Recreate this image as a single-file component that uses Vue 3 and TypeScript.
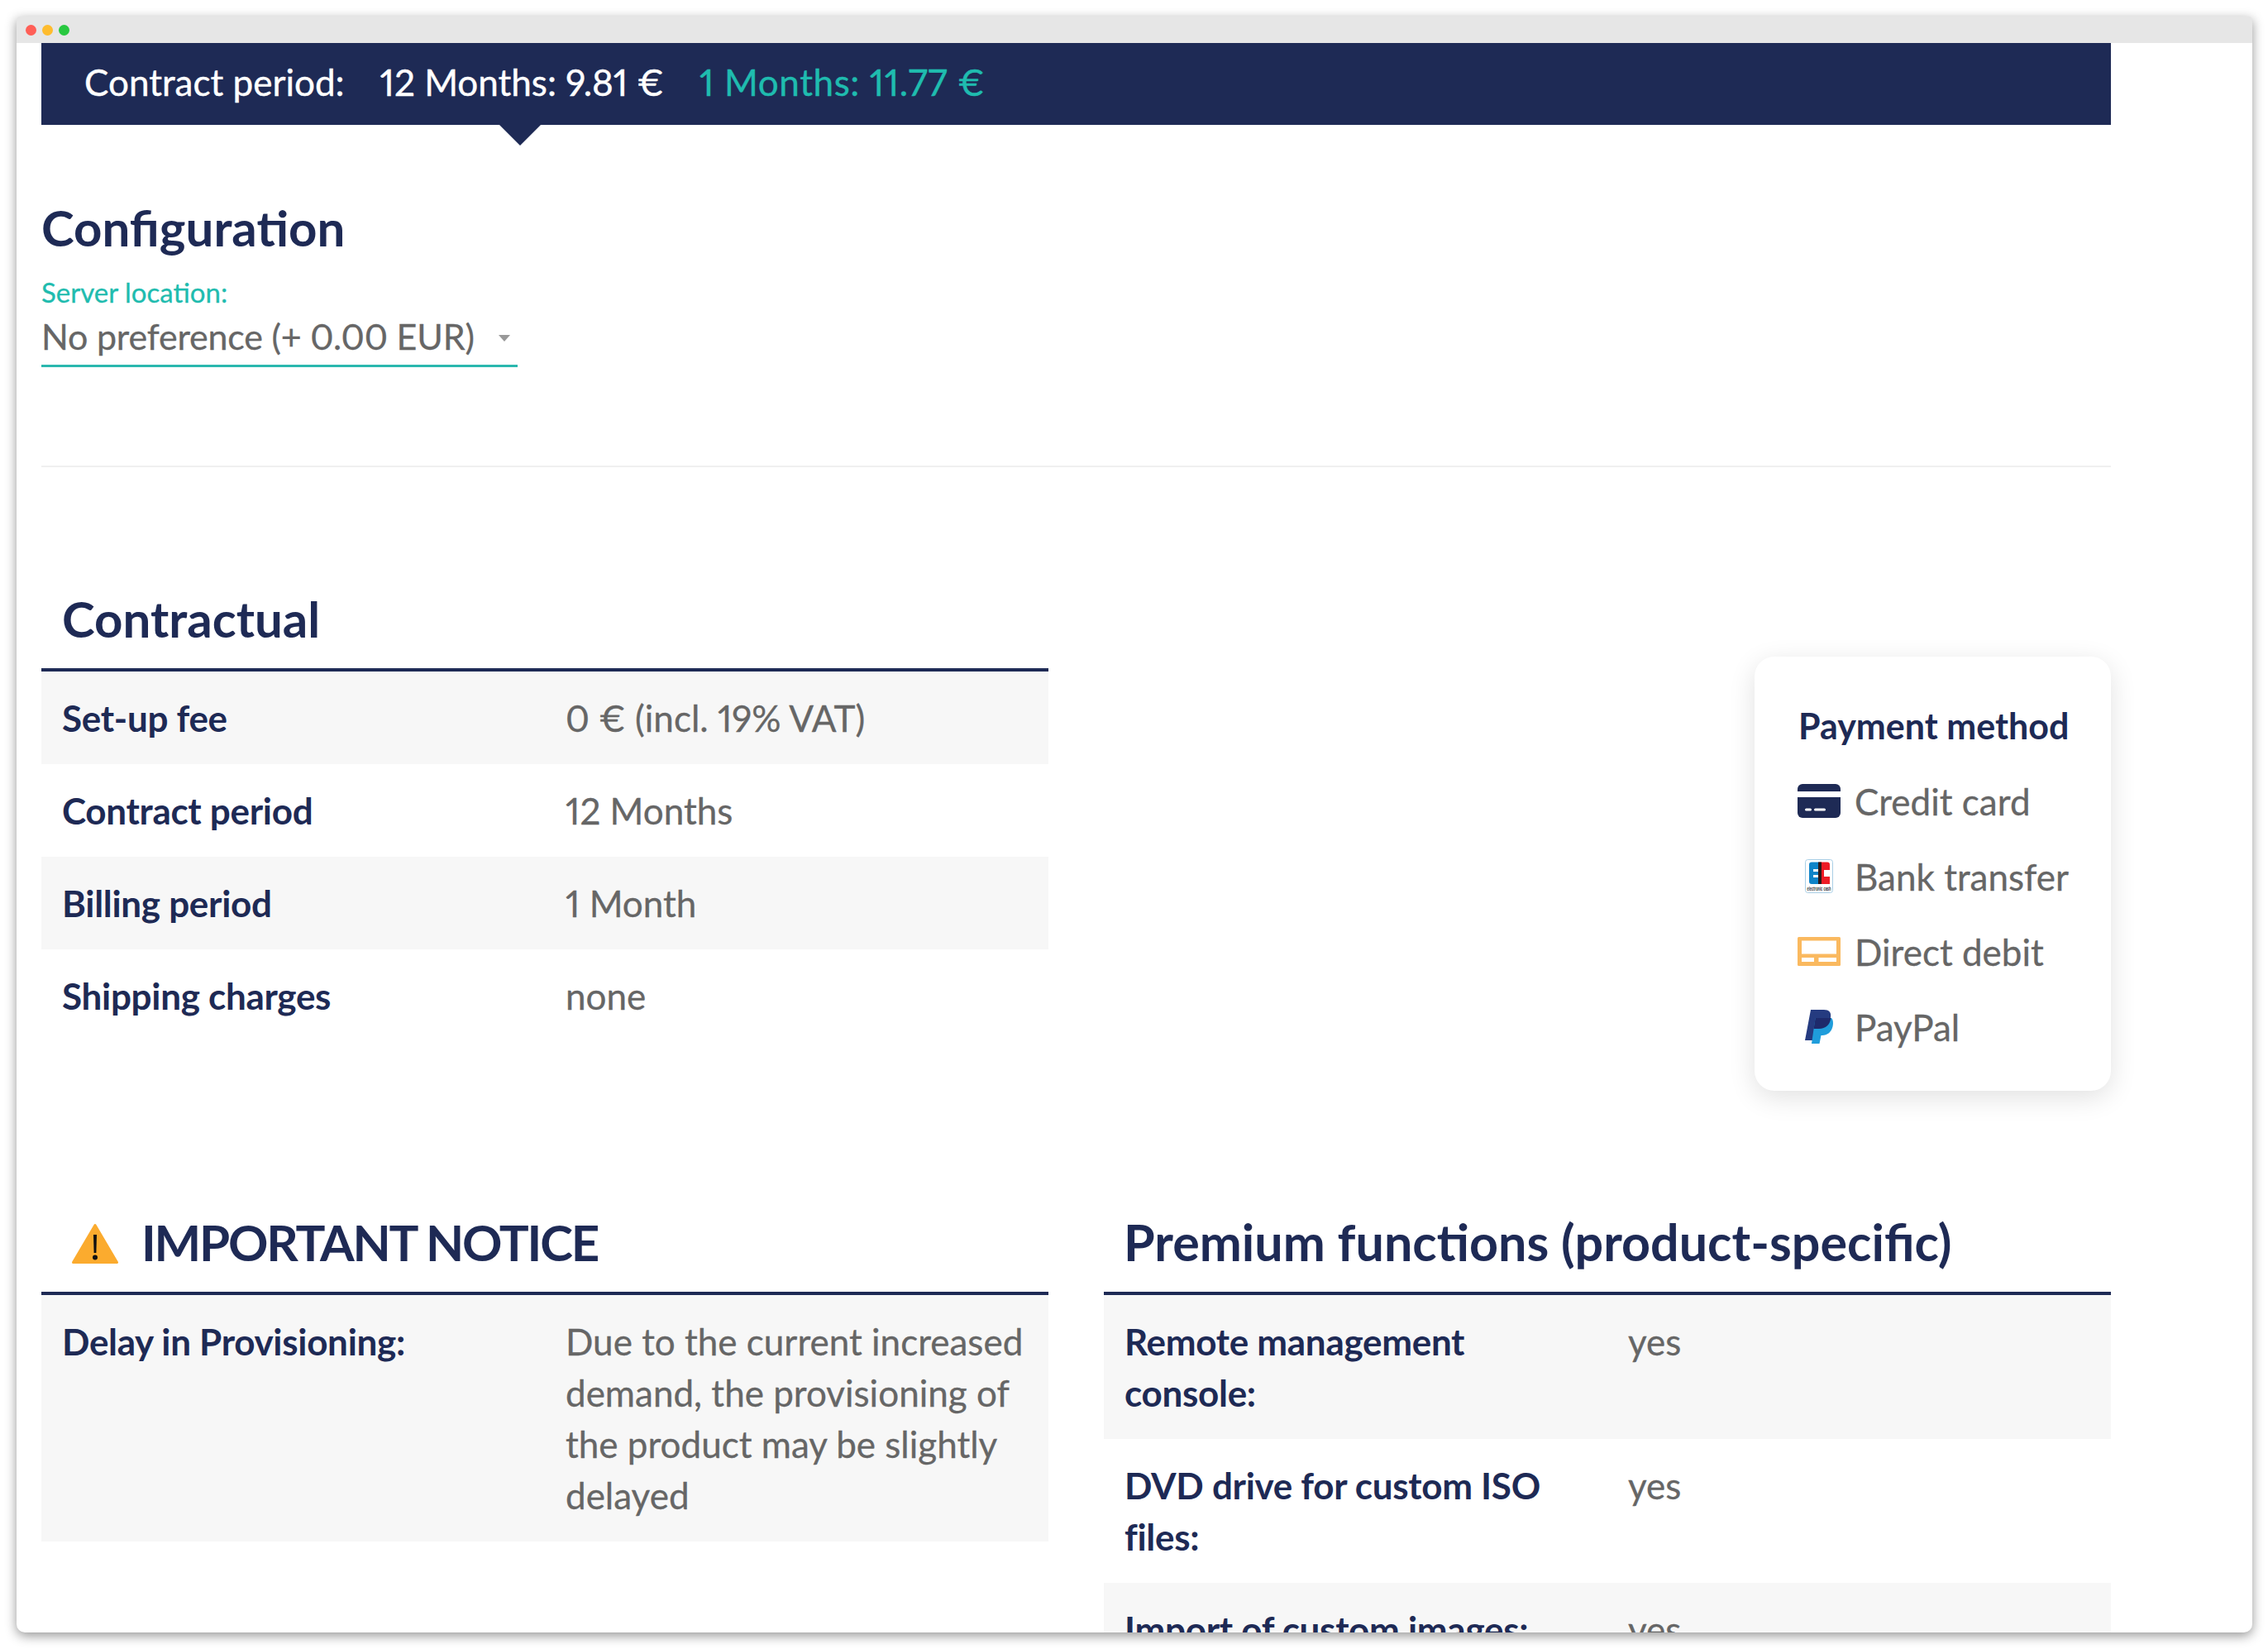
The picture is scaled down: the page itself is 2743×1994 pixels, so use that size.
<script setup lang="ts">
interface Row { label: string; value: string }

const contractual: Row[] = [
  { label: 'Set-up fee', value: '0 € (incl. 19% VAT)' },
  { label: 'Contract period', value: '12 Months' },
  { label: 'Billing period', value: '1 Month' },
  { label: 'Shipping charges', value: 'none' },
]
const notices: Row[] = [
  { label: 'Delay in Provisioning:', value: 'Due to the current increased demand, the provisioning of the product may be slightly delayed' },
]
const premium: Row[] = [
  { label: 'Remote management console:', value: 'yes' },
  { label: 'DVD drive for custom ISO files:', value: 'yes' },
  { label: 'Import of custom images:', value: 'yes' },
]
</script>

<template>
  <div class="page">
    <div class="window">
      <div class="titlebar">
        <span class="dot red"></span><span class="dot amber"></span><span class="dot green"></span>
      </div>
      <div class="content">
        <div class="banner">
          <span class="period-label">Contract period:</span>
          <span class="period active">12 Months: 9.81 €</span>
          <span class="period teal">1 Months: 11.77 €</span>
        </div>

        <h2 class="config-title">Configuration</h2>
        <div class="field-label">Server location:</div>
        <div class="select">
          <span class="select-text">No preference (+ 0.00 EUR)</span>
          <span class="caret"></span>
        </div>
        <div class="divider"></div>

        <div class="top-row">
          <section class="block">
            <h2 class="block-title">Contractual</h2>
            <div class="rows">
              <div v-for="r in contractual" :key="r.label" class="row">
                <div class="label">{{ r.label }}</div>
                <div class="value">{{ r.value }}</div>
              </div>
            </div>
          </section>

          <aside class="card">
            <div class="card-title">Payment method</div>
            <div class="pay">
              <svg class="pay-icon" width="52" height="41" viewBox="0 0 52 41">
                <path d="M0 9V6a6 6 0 0 1 6-6h40a6 6 0 0 1 6 6v3Z" fill="#1e2a55" />
                <path d="M0 16h52v19a6 6 0 0 1-6 6H6a6 6 0 0 1-6-6Z" fill="#1e2a55" />
                <rect x="9" y="29.5" width="8" height="3" rx="1.5" fill="#fff" />
                <rect x="20" y="29.5" width="14" height="3" rx="1.5" fill="#fff" />
              </svg>
              <span>Credit card</span>
            </div>
            <div class="pay">
              <svg class="pay-icon" width="52" height="41" viewBox="0 0 52 41">
                <rect x="9.5" y="0.5" width="33" height="40" rx="3" fill="#fff" stroke="#a9cfe6" />
                <path d="M17 3.500H26V30H17a3 3 0 0 1-3-3V6.500a3 3 0 0 1 3-3Z" fill="#0f84c8" />
                <path d="M26 3.500H36a3 3 0 0 1 3 3V30H26Z" fill="#ee1c25" />
                <rect x="19" y="12" width="7" height="3" fill="#fff" />
                <rect x="19" y="19" width="7" height="3" fill="#fff" />
                <rect x="32" y="13" width="7" height="8" fill="#fff" />
                <rect x="25" y="3.500" width="4" height="26.500" fill="#2a1a1a" />
                <text x="26" y="37.500" text-anchor="middle" textLength="29" lengthAdjust="spacingAndGlyphs" class="ec-text">electronic cash</text>
              </svg>
              <span>Bank transfer</span>
            </div>
            <div class="pay">
              <svg class="pay-icon" width="52" height="35" viewBox="0 0 52 35">
                <rect width="52" height="35" rx="1.5" fill="#fab95f" />
                <rect x="5" y="4.5" width="42" height="16" fill="#fff" />
                <rect x="5" y="25" width="15" height="5" fill="#fff" />
                <rect x="25.500" y="25" width="21.500" height="5" fill="#fff" />
              </svg>
              <span>Direct debit</span>
            </div>
            <div class="pay">
              <svg class="pay-icon" width="52" height="41" viewBox="-9 0 52 41">
                <path d="M7 0H23C29 0 32 3 31 9C30 18 25 23 17 23H12.500L10 37H0Z" fill="#253b80" />
                <path d="M12.600 10H32C34 12 34.500 16 33.600 20C32 27 27 31 21 31H19.500L17.500 41H8L10.600 23Z" fill="#1f9ddb" />
                <path d="M12.600 10H31.400C30.200 18 25 23 17 23H10.600Z" fill="#1e2a6b" />
              </svg>
              <span>PayPal</span>
            </div>
          </aside>
        </div>

        <div class="bottom-row">
          <section class="block">
            <h2 class="block-title with-icon">
              <svg class="warn" width="58" height="50" viewBox="0 0 58 50">
                <path d="M29 2.500 L55.500 47.500 H2.500 Z" fill="#fbab2e" stroke="#fbab2e" stroke-width="3" stroke-linejoin="round" />
                <path d="M27 14h4l-.6 22h-2.800z" fill="#111" />
                <circle cx="29" cy="41.500" r="3" fill="#111" />
              </svg>
              <span class="notice-text">IMPORTANT NOTICE</span>
            </h2>
            <div class="rows">
              <div v-for="r in notices" :key="r.label" class="row">
                <div class="label">{{ r.label }}</div>
                <div class="value">{{ r.value }}</div>
              </div>
            </div>
          </section>
          <section class="block">
            <h2 class="block-title premium-title">Premium functions (product-specific)</h2>
            <div class="rows">
              <div v-for="r in premium" :key="r.label" class="row">
                <div class="label">{{ r.label }}</div>
                <div class="value">{{ r.value }}</div>
              </div>
            </div>
          </section>
        </div>
      </div>
    </div>
  </div>
</template>

<style scoped>
.page {
  padding: 20px 19px 20px 20px;
  font-family: Lato, "Open Sans", sans-serif;
  font-variant-numeric: proportional-nums;
  color: #666;
}
.window {
  height: 1954px;
  overflow: hidden;
  background: #fff;
  border-radius: 3px 3px 10px 10px;
  box-shadow: 0 4px 14px rgba(0, 0, 0, 0.42);
}
.titlebar {
  height: 32px;
  background: #e6e6e6;
  display: flex;
  align-items: center;
  gap: 7px;
  padding-left: 11px;
}
.dot {
  width: 13px;
  height: 13px;
  border-radius: 50%;
}
.red { background: #ff5f57; }
.amber { background: #febc2e; }
.green { background: #28c840; }
.content {
  padding: 0 171px 0 30px;
}
.banner {
  height: 99px;
  box-sizing: border-box;
  padding: 0 0 5px 52px;
  background: #1e2a55;
  color: #fff;
  display: flex;
  align-items: center;
  font-size: 44px;
  -webkit-text-stroke: 0.4px currentColor;
}
.period-label { margin-right: 43px; }
.period { position: relative; margin-right: 43px; }
.period.teal { color: #1fbcaf; letter-spacing: 0.6px; }
.period.active::after {
  content: "";
  position: absolute;
  left: 50%;
  top: 77px;
  margin-left: -28px;
  border-left: 26px solid transparent;
  border-right: 26px solid transparent;
  border-top: 26px solid #1e2a55;
}
.config-title {
  margin: 88px 0 0;
  font-size: 60px;
  line-height: 72px;
  font-weight: 700;
  color: #1e2a55;
}
.field-label {
  margin-top: 22px;
  font-size: 33px;
  line-height: 40px;
  color: #1fbcaf;
  -webkit-text-stroke: 0.3px currentColor;
}
.select {
  width: 576px;
  height: 68px;
  border-bottom: 3px solid #2bb8ae;
  display: flex;
  align-items: center;
  justify-content: space-between;
  font-size: 43px;
  letter-spacing: -0.2px;
  color: #666;
  -webkit-text-stroke: 0.3px currentColor;
}
.select-text { padding-bottom: 2px; }
.caret {
  margin-right: 9px;
  margin-top: 4px;
  border-left: 7px solid transparent;
  border-right: 7px solid transparent;
  border-top: 8px solid #999;
}
.divider {
  margin-top: 119px;
  height: 2px;
  background: #f0f0f0;
}
.top-row {
  margin-top: 147px;
  display: flex;
  justify-content: space-between;
  align-items: flex-start;
}
.block {
  width: 1218px;
}
.block-title {
  margin: 0;
  padding: 0 25px 24px;
  font-size: 60px;
  line-height: 72px;
  font-weight: 700;
  color: #1e2a55;
  border-bottom: 4px solid #1e2a55;
}
.block-title.premium-title { font-size: 61px; padding-left: 24px; }
.block-title.with-icon {
  display: flex;
  align-items: center;
  padding-left: 36px;
  gap: 27px;
}
.notice-text { letter-spacing: -2.2px; white-space: nowrap; }
.warn { flex: none; margin-top: 4px; }
.rows {
  display: flex;
  flex-direction: column;
}
.row {
  display: grid;
  grid-template-columns: 609px 1fr;
  padding: 25px;
  font-size: 44px;
  line-height: 62px;
}
.row:nth-child(odd) { background: #f7f7f7; }
.label {
  font-weight: 700;
  color: #1e2a55;
  letter-spacing: -0.3px;
  padding-right: 60px;
}
.value {
  -webkit-text-stroke: 0.3px currentColor;
}
.card {
  width: 431px;
  height: 525px;
  box-sizing: border-box;
  margin-top: 82px;
  padding: 53px 0 30px 52px;
  background: #fff;
  border-radius: 24px;
  box-shadow: 0 8px 32px rgba(0, 0, 0, 0.12);
  flex: none;
}
.card-title {
  font-size: 43px;
  line-height: 62px;
  font-weight: 700;
  color: #1e2a55;
  margin: 0 0 14px 1px;
  white-space: nowrap;
}
.pay {
  height: 91px;
  display: flex;
  align-items: center;
  gap: 17px;
  font-size: 44px;
  color: #666;
  white-space: nowrap;
  -webkit-text-stroke: 0.3px currentColor;
}
.pay-icon { flex: none; -webkit-text-stroke: 0; }
.ec-text {
  font-family: "Liberation Sans", sans-serif;
  font-size: 6.500px;
  font-weight: 700;
  fill: #333;
}
.bottom-row {
  margin-top: 147px;
  display: flex;
  justify-content: space-between;
  align-items: flex-start;
}
</style>
